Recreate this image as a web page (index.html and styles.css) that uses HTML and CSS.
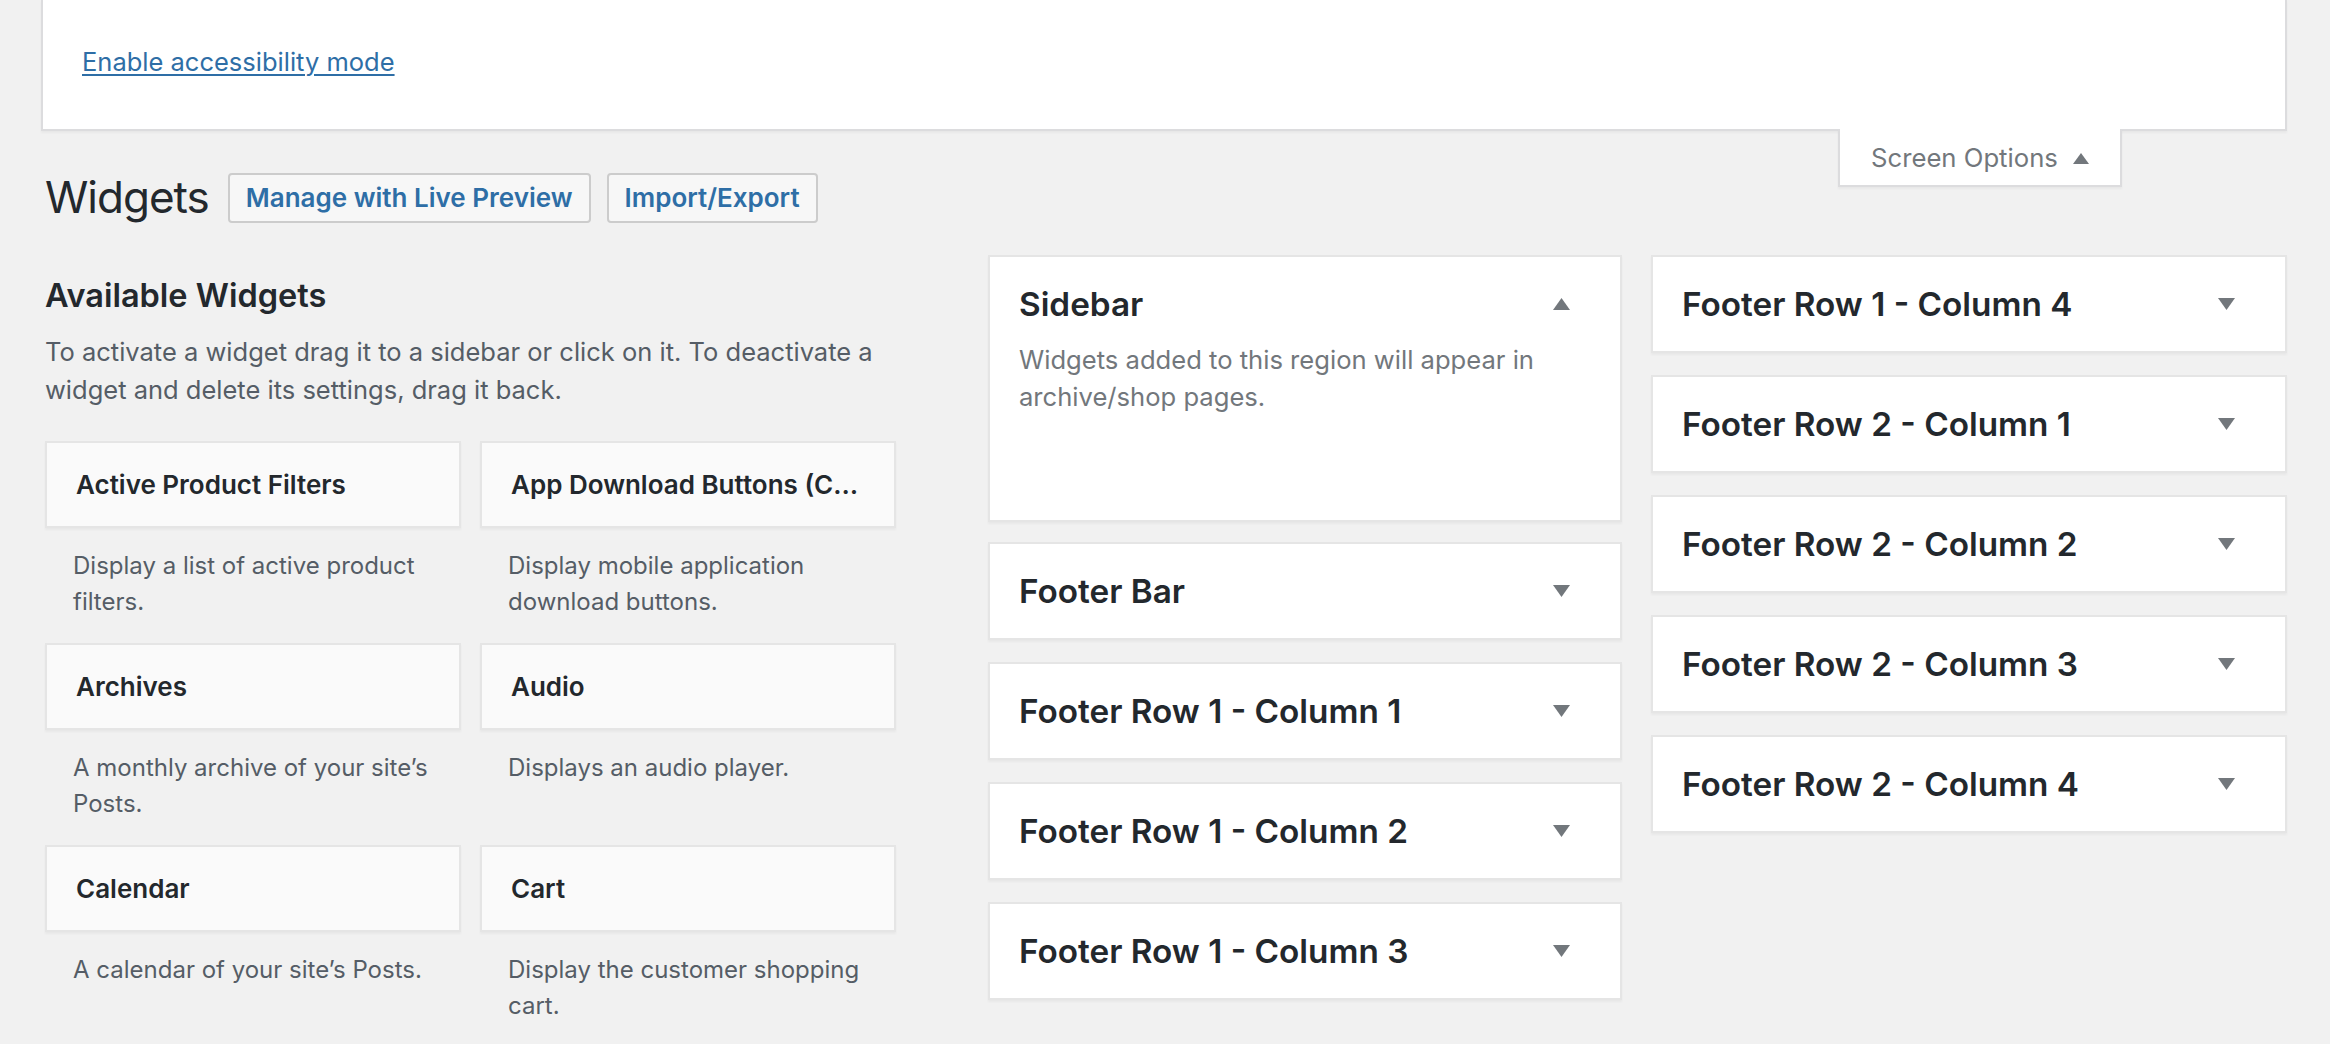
FILE: index.html
```html
<!DOCTYPE html>
<html lang="en">
<head>
<meta charset="utf-8">
<title>Widgets</title>
<link rel="stylesheet" href="styles.css">
</head>
<body>
<div class="screen-meta">
  <p class="access"><a href="#">Enable accessibility mode</a></p>
</div>
<div class="meta-links">
  <button class="meta-toggle" type="button">Screen Options
    <svg class="tab-arrow" width="16" height="11" viewBox="0 0 16 11"><path d="M8 0L16 11H0z"/></svg>
  </button>
</div>
<div class="wrap">
  <div class="title-row">
    <h1 class="page-title">Widgets</h1>
    <a class="title-action" href="#">Manage with Live Preview</a>
    <a class="title-action" href="#">Import/Export</a>
  </div>
  <div class="columns">
    <div class="col-left">
      <h2 class="avail-title">Available Widgets</h2>
      <p class="intro">To activate a widget drag it to a sidebar or click on it. To deactivate a widget and delete its settings, drag it back.</p>
      <div class="widget-list">
        <div class="widget">
          <div class="widget-top"><h3 class="widget-title">Active Product Filters</h3></div>
          <div class="widget-desc">Display a list of active product filters.</div>
        </div>
        <div class="widget">
          <div class="widget-top"><h3 class="widget-title">App Download Buttons (Customizer)</h3></div>
          <div class="widget-desc">Display mobile application download buttons.</div>
        </div>
        <div class="widget">
          <div class="widget-top"><h3 class="widget-title">Archives</h3></div>
          <div class="widget-desc">A monthly archive of your site’s Posts.</div>
        </div>
        <div class="widget">
          <div class="widget-top"><h3 class="widget-title">Audio</h3></div>
          <div class="widget-desc">Displays an audio player.</div>
        </div>
        <div class="widget">
          <div class="widget-top"><h3 class="widget-title">Calendar</h3></div>
          <div class="widget-desc">A calendar of your site’s Posts.</div>
        </div>
        <div class="widget">
          <div class="widget-top"><h3 class="widget-title">Cart</h3></div>
          <div class="widget-desc">Display the customer shopping cart.</div>
        </div>
      </div>
    </div>

    <div class="col-mid">
      <div class="sidebar open">
        <div class="sidebar-name">
          <h2 class="sidebar-title">Sidebar</h2>
          <svg class="arrow" width="17" height="12" viewBox="0 0 17 12"><path d="M8.5 0L17 12H0z"/></svg>
        </div>
        <p class="sidebar-desc">Widgets added to this region will appear in archive/shop pages.</p>
      </div>
      <div class="sidebar">
        <div class="sidebar-name">
          <h2 class="sidebar-title">Footer Bar</h2>
          <svg class="arrow" width="17" height="12" viewBox="0 0 17 12"><path d="M0 0H17L8.5 12z"/></svg>
        </div>
      </div>
      <div class="sidebar">
        <div class="sidebar-name">
          <h2 class="sidebar-title">Footer Row 1 - Column 1</h2>
          <svg class="arrow" width="17" height="12" viewBox="0 0 17 12"><path d="M0 0H17L8.5 12z"/></svg>
        </div>
      </div>
      <div class="sidebar">
        <div class="sidebar-name">
          <h2 class="sidebar-title">Footer Row 1 - Column 2</h2>
          <svg class="arrow" width="17" height="12" viewBox="0 0 17 12"><path d="M0 0H17L8.5 12z"/></svg>
        </div>
      </div>
      <div class="sidebar">
        <div class="sidebar-name">
          <h2 class="sidebar-title">Footer Row 1 - Column 3</h2>
          <svg class="arrow" width="17" height="12" viewBox="0 0 17 12"><path d="M0 0H17L8.5 12z"/></svg>
        </div>
      </div>
    </div>

    <div class="col-right">
      <div class="sidebar">
        <div class="sidebar-name">
          <h2 class="sidebar-title">Footer Row 1 - Column 4</h2>
          <svg class="arrow" width="17" height="12" viewBox="0 0 17 12"><path d="M0 0H17L8.5 12z"/></svg>
        </div>
      </div>
      <div class="sidebar">
        <div class="sidebar-name">
          <h2 class="sidebar-title">Footer Row 2 - Column 1</h2>
          <svg class="arrow" width="17" height="12" viewBox="0 0 17 12"><path d="M0 0H17L8.5 12z"/></svg>
        </div>
      </div>
      <div class="sidebar">
        <div class="sidebar-name">
          <h2 class="sidebar-title">Footer Row 2 - Column 2</h2>
          <svg class="arrow" width="17" height="12" viewBox="0 0 17 12"><path d="M0 0H17L8.5 12z"/></svg>
        </div>
      </div>
      <div class="sidebar">
        <div class="sidebar-name">
          <h2 class="sidebar-title">Footer Row 2 - Column 3</h2>
          <svg class="arrow" width="17" height="12" viewBox="0 0 17 12"><path d="M0 0H17L8.5 12z"/></svg>
        </div>
      </div>
      <div class="sidebar">
        <div class="sidebar-name">
          <h2 class="sidebar-title">Footer Row 2 - Column 4</h2>
          <svg class="arrow" width="17" height="12" viewBox="0 0 17 12"><path d="M0 0H17L8.5 12z"/></svg>
        </div>
      </div>
    </div>
  </div>
</div>
</body>
</html>
```
FILE: styles.css
```css
html {
  background: #f1f1f1;
}

body {
  margin: 0;
  font-family: Inter, "Noto Sans", "Liberation Sans", sans-serif;
  font-size: 26px;
  color: #23282d;
}

/* Screen options panel */
.screen-meta {
  margin: 0 43px 0 41px;
  height: 87px;
  padding: 42px 0 0 39px;
  background: #fff;
  border: 2px solid #dcdcde;
  border-top: 0;
  box-shadow: 0 2px 2px rgba(0, 0, 0, 0.04);
}

.access {
  margin: 0;
  font-size: 25.5px;
  line-height: 40px;
}

.access a {
  color: #2e6ea6;
  text-decoration: underline;
  text-decoration-thickness: 2px;
  text-underline-offset: 3px;
}

.meta-links {
  float: right;
  margin: -2px 208px 0 0;
}

.meta-toggle {
  display: flex;
  align-items: center;
  gap: 15px;
  box-sizing: border-box;
  height: 58px;
  min-width: 284px;
  padding: 2px 31px 0;
  background: #fff;
  border: 2px solid #dcdcde;
  border-top: 0;
  box-shadow: 0 2px 2px rgba(0, 0, 0, 0.04);
  font-family: inherit;
  font-size: 25.7px;
  line-height: 40px;
  color: #72777c;
  cursor: pointer;
}

.tab-arrow {
  fill: #72777c;
  flex: none;
}

/* Page */
.wrap {
  padding: 0 43px 0 45px;
}

.title-row {
  display: flex;
  align-items: flex-start;
  padding-top: 36px;
}

.page-title {
  margin: 0 19px 0 0;
  font-size: 44px;
  font-weight: 400;
  letter-spacing: -1px;
  line-height: 60px;
  color: #23282d;
}

.title-action {
  margin-top: 6px;
  height: 50px;
  box-sizing: border-box;
  padding: 0 16px;
  border: 2px solid #cccccc;
  border-radius: 4px;
  background: #f7f7f7;
  color: #2e6ea6;
  font-size: 26px;
  font-weight: 600;
  line-height: 46px;
  text-decoration: none;
  white-space: nowrap;
}

.title-action + .title-action {
  margin-left: 16px;
}

.columns {
  display: flex;
  align-items: flex-start;
  margin-top: 28px;
}

.col-left {
  flex: none;
  width: 851px;
  margin-right: 92px;
}

.col-mid {
  flex: none;
  width: 634px;
  margin-right: 29px;
}

.col-right {
  flex: none;
  width: 636px;
}

/* Available widgets */
.avail-title {
  margin: 21px 0 0;
  font-size: 32.5px;
  font-weight: 600;
  line-height: 40px;
}

.intro {
  margin: 17px 0 0;
  font-size: 25.5px;
  line-height: 37.5px;
  color: #555d66;
}

.widget-list {
  display: grid;
  grid-template-columns: 416px 416px;
  column-gap: 19px;
  margin-top: 33px;
}

.widget-top {
  height: 87px;
  box-sizing: border-box;
  padding: 0 29px;
  border: 2px solid #e5e5e5;
  background: #fafafa;
  box-shadow: 0 2px 2px rgba(0, 0, 0, 0.04);
}

.widget-title {
  margin: 0;
  font-size: 26px;
  font-weight: 600;
  line-height: 83px;
  white-space: nowrap;
  overflow: hidden;
  text-overflow: ellipsis;
}

.widget-desc {
  padding: 20px 24px 23px 28px;
  font-size: 24px;
  line-height: 36px;
  color: #555d66;
}

/* Sidebars */
.sidebar {
  margin-bottom: 22px;
  background: #fff;
  border: 2px solid #e5e5e5;
  box-shadow: 0 2px 2px rgba(0, 0, 0, 0.04);
}

.sidebar.open {
  margin-bottom: 20px;
}

.sidebar-name {
  display: flex;
  align-items: center;
  justify-content: space-between;
  padding: 27px 50px 27px 29px;
}

.sidebar.open .sidebar-name {
  padding-bottom: 0;
}

.sidebar-title {
  margin: 0;
  font-size: 33.3px;
  font-weight: 600;
  line-height: 40px;
  color: #23282d;
}

.arrow {
  flex: none;
  fill: #72777c;
}

.sidebar-desc {
  margin: 17px 0 0;
  padding: 0 29px 104px;
  font-size: 25.6px;
  line-height: 37.4px;
  color: #72777c;
}
```
